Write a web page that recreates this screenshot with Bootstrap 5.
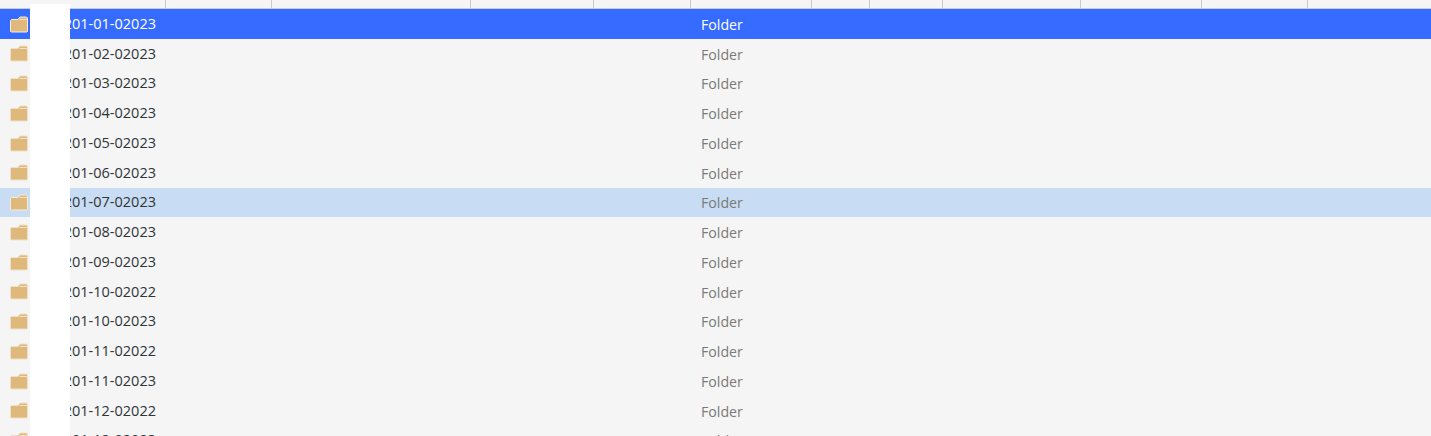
<!DOCTYPE html>
<html lang="en">
<head>
  <meta charset="UTF-8">
  <title>Folder list</title>
  <link href="https://cdn.jsdelivr.net/npm/bootstrap@5.3.2/dist/css/bootstrap.min.css" rel="stylesheet">
  <style>
    html, body { height: 100%; overflow: hidden; }
    body { background-color: #f5f5f5; font-family: "Open Sans", "Noto Sans", sans-serif; font-size: 14.2px; }
    .file-list { position: relative; height: 436px; overflow: hidden; }
    .head-row { height: 9px; border-bottom: 1px solid #c9c9d1; }
    .head-cell { border-right: 1px solid #c9c9d1; flex: none; }
    .w165 { width: 166px; }
    .w106 { width: 106px; }
    .w199 { width: 199px; }
    .w123 { width: 123px; }
    .w97 { width: 97px; }
    .w121 { width: 121px; }
    .w58 { width: 58px; }
    .w73 { width: 73px; }
    .w138 { width: 138px; }
    .file-row { height: 29.75px; color: #2f3437; }
    .file-row.picked { background-color: #356bff; color: #fff; }
    .file-row.picked .file-type { color: #fff; }
    .file-row.hover { background-color: #c8dcf4; }
    .file-row.hover .folder-icon, .file-row.picked .folder-icon { stroke: #f6ecdc; }
    .folder-icon { width: 20px; height: 17px; margin-left: 9px; margin-top: 0.5px; flex: none; stroke: #efe0c9; }
    .file-name { width: 156px; flex: none; margin-left: -29px; margin-top: -0.5px; font-size: 14.5px; text-align: right; white-space: nowrap; }
    .file-type { margin-left: 545px; margin-top: 1.5px; color: #7a7a7a; }
    .blank-mask { position: absolute; left: 30px; top: 4px; width: 40px; bottom: 0; background-color: #fff; }
  </style>
</head>
<body>

  <svg width="0" height="0" class="position-absolute">
    <symbol id="folder" viewBox="0 0 20 17">
      <path d="M1.5 15.5V4.5L2.5 3.5H9L11 1H17.5L18.5 2V15.5L17.5 16H2.5Z" fill="#dfb97c" stroke-width="1"/>
      <path d="M10.5 3.5H18" fill="none" stroke="#f3e2c6" stroke-width="1"/>
    </symbol>
  </svg>

  <div class="file-list">
    <div class="head-row d-flex">
      <div class="head-cell w165"></div>
      <div class="head-cell w106"></div>
      <div class="head-cell w199"></div>
      <div class="head-cell w123"></div>
      <div class="head-cell w97"></div>
      <div class="head-cell w121"></div>
      <div class="head-cell w58"></div>
      <div class="head-cell w73"></div>
      <div class="head-cell w138"></div>
      <div class="head-cell w121"></div>
      <div class="head-cell w106"></div>
    </div>

    <div class="file-row picked d-flex align-items-center"><svg class="folder-icon"><use href="#folder"/></svg><span class="file-name">201-01-02023</span><span class="file-type">Folder</span></div>
    <div class="file-row d-flex align-items-center"><svg class="folder-icon"><use href="#folder"/></svg><span class="file-name">201-02-02023</span><span class="file-type">Folder</span></div>
    <div class="file-row d-flex align-items-center"><svg class="folder-icon"><use href="#folder"/></svg><span class="file-name">201-03-02023</span><span class="file-type">Folder</span></div>
    <div class="file-row d-flex align-items-center"><svg class="folder-icon"><use href="#folder"/></svg><span class="file-name">201-04-02023</span><span class="file-type">Folder</span></div>
    <div class="file-row d-flex align-items-center"><svg class="folder-icon"><use href="#folder"/></svg><span class="file-name">201-05-02023</span><span class="file-type">Folder</span></div>
    <div class="file-row d-flex align-items-center"><svg class="folder-icon"><use href="#folder"/></svg><span class="file-name">201-06-02023</span><span class="file-type">Folder</span></div>
    <div class="file-row hover d-flex align-items-center"><svg class="folder-icon"><use href="#folder"/></svg><span class="file-name">201-07-02023</span><span class="file-type">Folder</span></div>
    <div class="file-row d-flex align-items-center"><svg class="folder-icon"><use href="#folder"/></svg><span class="file-name">201-08-02023</span><span class="file-type">Folder</span></div>
    <div class="file-row d-flex align-items-center"><svg class="folder-icon"><use href="#folder"/></svg><span class="file-name">201-09-02023</span><span class="file-type">Folder</span></div>
    <div class="file-row d-flex align-items-center"><svg class="folder-icon"><use href="#folder"/></svg><span class="file-name">201-10-02022</span><span class="file-type">Folder</span></div>
    <div class="file-row d-flex align-items-center"><svg class="folder-icon"><use href="#folder"/></svg><span class="file-name">201-10-02023</span><span class="file-type">Folder</span></div>
    <div class="file-row d-flex align-items-center"><svg class="folder-icon"><use href="#folder"/></svg><span class="file-name">201-11-02022</span><span class="file-type">Folder</span></div>
    <div class="file-row d-flex align-items-center"><svg class="folder-icon"><use href="#folder"/></svg><span class="file-name">201-11-02023</span><span class="file-type">Folder</span></div>
    <div class="file-row d-flex align-items-center"><svg class="folder-icon"><use href="#folder"/></svg><span class="file-name">201-12-02022</span><span class="file-type">Folder</span></div>
    <div class="file-row d-flex align-items-center"><svg class="folder-icon"><use href="#folder"/></svg><span class="file-name">201-12-02023</span><span class="file-type">Folder</span></div>

    <div class="blank-mask"></div>
  </div>

</body>
</html>
